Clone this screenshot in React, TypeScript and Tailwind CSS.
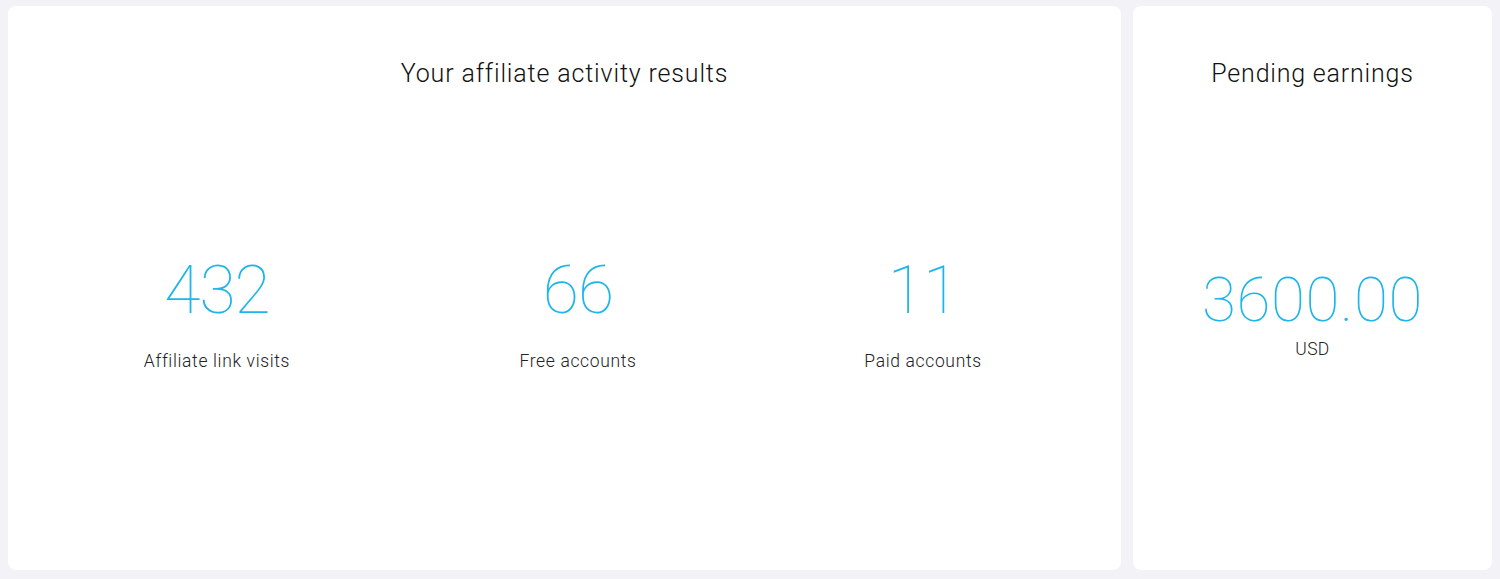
const stats = [
  { value: '432', label: 'Affiliate link visits' },
  { value: '66', label: 'Free accounts' },
  { value: '11', label: 'Paid accounts' },
];

function Stat({ value, label }: { value: string; label: string }) {
  return (
    <div className="flex flex-col items-center">
      <span className="text-[66px] font-thin leading-[80px] tracking-[-1px] text-[#1cb5ec]">
        {value}
      </span>
      <span className="mt-[18px] text-[17.5px] font-light leading-6 tracking-[0.65px] text-[#222]">
        {label}
      </span>
    </div>
  );
}

export default function App() {
  return (
    <div
      className="flex h-[579px] w-full gap-3 bg-[#f3f3f7] px-2 pb-[9px] pt-[6px]"
      style={{ fontFamily: 'Roboto, "Noto Sans", sans-serif' }}
    >
      {/* Activity results */}
      <div className="flex flex-1 flex-col rounded-lg bg-white pt-[52px]">
        <h2 className="text-center text-[25px] font-light leading-8 tracking-[0.85px] text-[#111]">
          Your affiliate activity results
        </h2>
        <div className="flex flex-1 items-center pb-[36px]">
          <div className="grid w-full grid-cols-[418px_304px_1fr] pr-[5px]">
            {stats.map((s) => (
              <Stat key={s.label} value={s.value} label={s.label} />
            ))}
          </div>
        </div>
      </div>

      {/* Pending earnings */}
      <div className="flex w-[359px] flex-col rounded-lg bg-white pt-[52px]">
        <h2 className="text-center text-[25px] font-light leading-8 tracking-[0.8px] text-[#111]">
          Pending earnings
        </h2>
        <div className="flex flex-1 flex-col items-center justify-center pb-[38px]">
          <span className="text-[62px] font-thin leading-[76px] tracking-[0.6px] text-[#1cb5ec]">
            3600.00
          </span>
          <span className="-mt-[1px] text-[17.5px] font-light leading-6 tracking-[0.3px] text-[#222]">USD</span>
        </div>
      </div>
    </div>
  );
}
